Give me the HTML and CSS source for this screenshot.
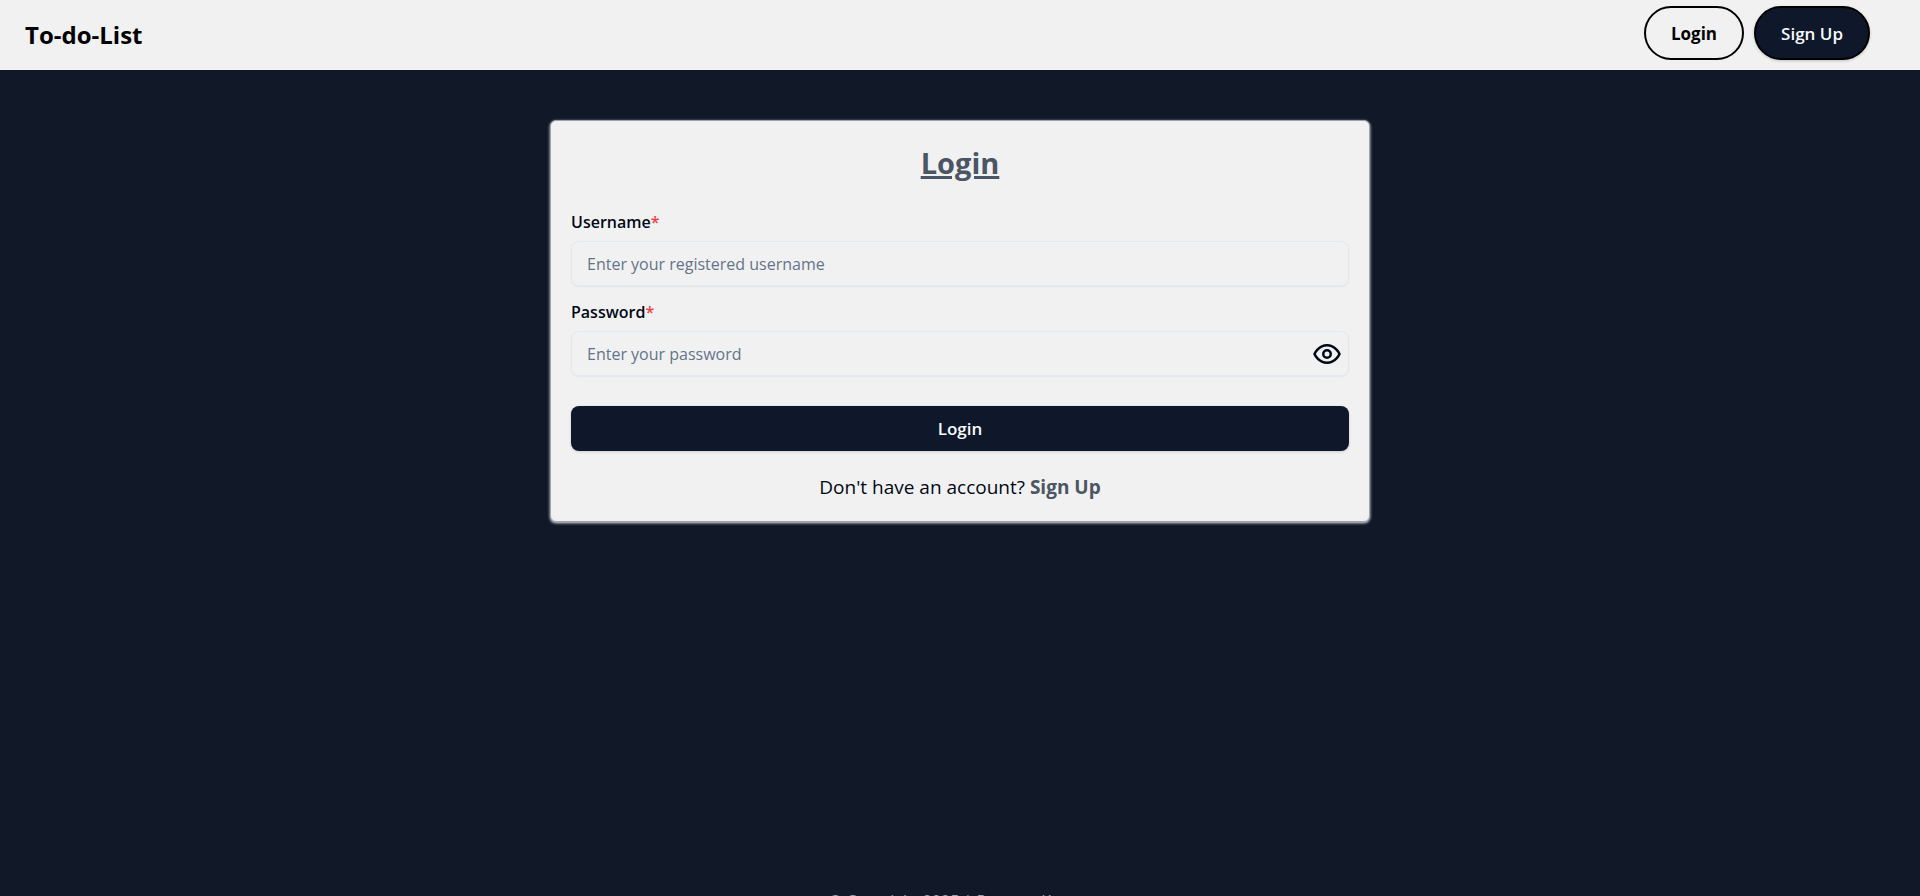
FILE: index.html
```html
<!DOCTYPE html>
<html lang="en">
<head>
<meta charset="utf-8">
<meta name="viewport" content="width=device-width, initial-scale=1">
<title>To-do-List</title>
<link rel="stylesheet" href="styles.css">
</head>
<body>
<header class="navbar">
  <a class="brand" href="#">To-do-List</a>
  <nav class="nav-actions">
    <button class="pill" type="button">Login</button>
    <button class="pill pill-dark" type="button">Sign Up</button>
  </nav>
</header>
<main class="page">
  <form class="card">
    <h1 class="title">Login</h1>
    <div class="field">
      <label class="label" for="username">Username<span class="required">*</span></label>
      <input class="input" id="username" type="text" placeholder="Enter your registered username">
    </div>
    <div class="field">
      <label class="label" for="password">Password<span class="required">*</span></label>
      <div class="password">
        <input class="input" id="password" type="password" placeholder="Enter your password">
        <button class="reveal" type="button" aria-label="Show password">
          <svg viewBox="0 0 24 24" width="30" height="30" fill="none" stroke="currentColor" stroke-width="2" stroke-linecap="round" stroke-linejoin="round"><path d="M2 12s3-7 10-7 10 7 10 7-3 7-10 7-10-7-10-7Z"/><circle cx="12" cy="12" r="3"/></svg>
        </button>
      </div>
    </div>
    <button class="submit" type="submit">Login</button>
    <p class="switch">Don't have an account? <a class="switch-link" href="#">Sign Up</a></p>
  </form>
</main>
<footer class="footer">© Copyright 2025 | Praveen Kumar</footer>
</body>
</html>
```
FILE: styles.css
```css
* {
  box-sizing: border-box;
}

body {
  margin: 0;
  height: 100vh;
  overflow: hidden;
  display: flex;
  flex-direction: column;
  background: #111827;
  color: #020817;
  font-family: "Open Sans", "Noto Sans", sans-serif;
  font-size: 16px;
  line-height: 24px;
}

button,
input {
  font: inherit;
}

.navbar {
  display: flex;
  flex-shrink: 0;
  align-items: center;
  justify-content: space-between;
  height: 70px;
  padding: 0 50px 4px 25px;
  background: #f1f1f1;
}

.brand {
  color: #000;
  font-size: 24px;
  font-weight: 700;
  line-height: 32px;
  padding-top: 4px;
  text-decoration: none;
}

.nav-actions {
  display: flex;
  gap: 10px;
}

.pill {
  height: 54px;
  padding: 2px 25px 0;
  border: 2px solid #000;
  border-radius: 27px;
  background: #f1f1f1;
  color: #000;
  font-size: 17px;
  font-weight: 700;
}

.pill-dark {
  background: #0f172a;
  color: #f8fafc;
  font-weight: 600;
  box-shadow: 0 1px 3px rgba(0, 0, 0, 0.2);
}

.page {
  flex: 1 0 auto;
  min-height: calc(100vh - 77px);
  padding: 50px 20px;
}

.card {
  max-width: 820px;
  margin: 0 auto;
  padding: 20px 20px 19px;
  border: 1px solid #9ca3af;
  border-radius: 6px;
  background: #f1f1f1;
  box-shadow: 0 1px 3px #f1f1f1;
}

.title {
  margin: 0 0 26px;
  color: #4b5563;
  font-size: 29px;
  font-weight: 700;
  line-height: 43px;
  text-align: center;
  text-decoration: underline;
  text-decoration-thickness: 3px;
}

.field {
  margin-bottom: 14px;
}

.label {
  display: block;
  margin-bottom: 7px;
  font-weight: 600;
}

.required {
  color: #ef4444;
}

.input {
  display: block;
  width: 100%;
  height: 45px;
  padding: 0 15px;
  border: 1px solid #e2e8f0;
  border-radius: 8px;
  background: transparent;
  box-shadow: 0 1px 2px rgba(0, 0, 0, 0.05);
}

.input::placeholder {
  color: #64748b;
  opacity: 1;
}

.password {
  position: relative;
}

.password .input {
  padding-right: 48px;
}

.reveal {
  position: absolute;
  top: 0;
  right: 7px;
  display: flex;
  align-items: center;
  height: 100%;
  padding: 0;
  border: 0;
  background: none;
  color: #020817;
}

.submit {
  display: block;
  width: 100%;
  height: 45px;
  margin-top: 30px;
  border: 0;
  border-radius: 8px;
  background: #0f172a;
  color: #f8fafc;
  font-size: 17px;
  font-weight: 600;
  box-shadow: 0 1px 3px rgba(0, 0, 0, 0.15);
}

.switch {
  margin: 21px 0 0;
  font-size: 19px;
  line-height: 30px;
  text-align: center;
}

.switch-link {
  color: #4b5563;
  font-weight: 700;
  text-decoration: none;
}

.footer {
  flex-shrink: 0;
  color: #9ca3af;
  text-align: center;
}
```
